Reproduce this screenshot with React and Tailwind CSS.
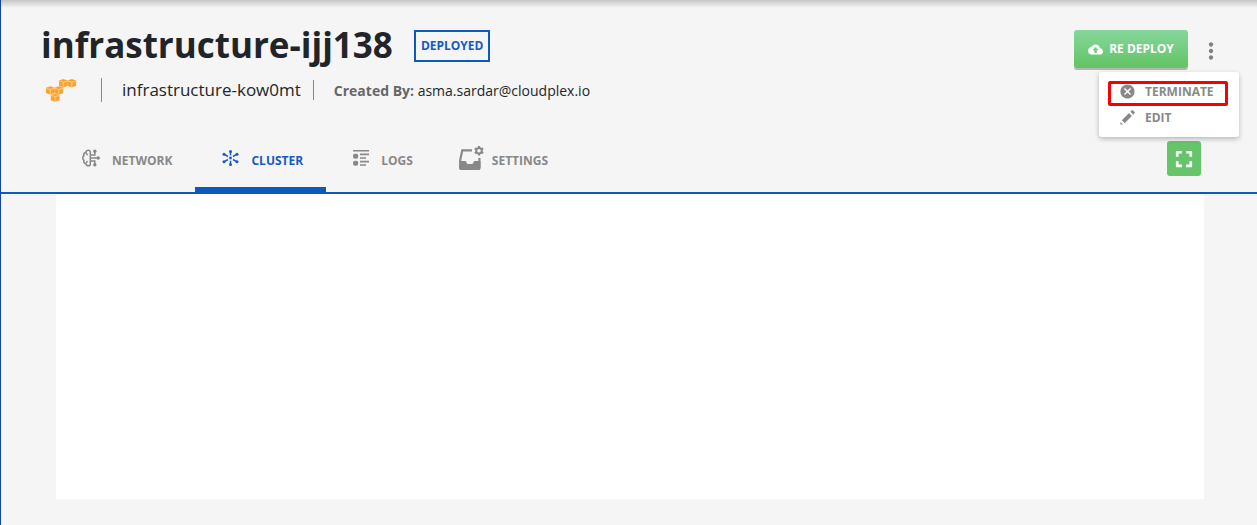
import React from 'react';

function AwsCubes() {
  const cubes = [[13, 0], [21.5, 0], [0, 7.3], [8.5, 7.3], [4.8, 14.4]];
  return (
    <svg className="block h-[23px] w-[31px]" viewBox="0 0 31 23" role="img" aria-label="AWS">
      {cubes.map(([x, y]) => (
        <g key={`${x}-${y}`} transform={`translate(${x} ${y})`}>
          <path d="M4.3 0 8.7 1.5V6.8L4.3 8.4 0 6.8V1.5Z" fill="#f8a431" />
          <path d="M0 2 4.3 3.2 8.7 2M4.3 3.2V8.2" fill="none" stroke="#fce3bf" strokeWidth=".6" />
        </g>
      ))}
    </svg>
  );
}

function NetworkIcon() {
  return (
    <svg className="h-[18px] w-[18px]" viewBox="0 0 18 18" fill="none" stroke="currentColor" strokeWidth="1.5">
      <path d="M8.3 3V15C8.3 17.4 4.3 17.6 4 14.8C1.8 14.4 1.3 12.6 2 11.3C.3 10 .3 7.8 2 6.7C1.3 5.2 2.2 3.4 4 3.2C4.3.4 8.3.6 8.3 3ZM4.2 4.2C4.3 5 4.9 5.6 5.8 5.7M4.2 13.8C4.3 13 4.9 12.4 5.8 12.4M8.3 9H15.5M8.3 6H12.8V3M8.3 12H12.8V15" />
      <g fill="currentColor" stroke="none">
        <circle cx="12.8" cy="2.3" r="1.7" />
        <circle cx="16.2" cy="9" r="1.8" />
        <circle cx="12.8" cy="15.7" r="1.7" />
      </g>
    </svg>
  );
}

function ClusterIcon() {
  return (
    <svg className="h-4 w-[17px]" viewBox="0 0 17 16" fill="currentColor" stroke="currentColor" strokeWidth="1.5">
      <path d="M8.5 2V5.3M8.5 10.7V14M2 4.2 6 6.5M11 9.5 15 11.8M15 4.2 11 6.5M6 9.5 2 11.8" />
      <g stroke="none">
        <circle cx="8.5" cy="1.6" r="1.5" />
        <circle cx="8.5" cy="14.4" r="1.5" />
        <circle cx="2" cy="4.2" r="1.5" />
        <circle cx="15" cy="4.2" r="1.5" />
        <circle cx="2" cy="11.8" r="1.5" />
        <circle cx="15" cy="11.8" r="1.5" />
        <circle cx="8.5" cy="8" r="1.4" />
      </g>
    </svg>
  );
}

function LogsIcon() {
  return (
    <svg className="h-4 w-4" viewBox="0 0 16 16" fill="currentColor">
      <path d="M0 0H16V1.6H0ZM7 3.6H16V5.2H7ZM7 7.2H13V8.8H7ZM7 10.8H16V12.4H7ZM7 14.2H13V15.8H7Z" />
      <rect y="3.8" width="5.2" height="5" rx="2" />
      <rect y="10.8" width="5.2" height="5" rx="2" />
    </svg>
  );
}

function SettingsIcon() {
  return (
    <svg className="h-6 w-[25px]" viewBox="0 0 25 24" fill="none">
      <path d="M13 4.3H3.3L1.2 14V21.5Q1.2 23 2.7 23H19Q20.4 23 20.4 21.5V12" stroke="currentColor" strokeWidth="2.2" />
      <path d="M1 15H6Q7.3 15 7.5 16.4 7.8 18 9.3 18H12.7Q14.2 18 14.4 16.4 14.6 15 16 15H21.5V22Q21.5 24 19.5 24H2.2Q.2 24 .2 22Z" fill="currentColor" />
      <circle cx="20" cy="4.8" r="2.8" stroke="currentColor" strokeWidth="2" />
      <path d="M20 0V2M20 7.6V9.6M15.8 2.4 17.6 3.4M22.4 6.2 24.2 7.2M24.2 2.4 22.4 3.4M17.6 6.2 15.8 7.2" stroke="currentColor" strokeWidth="2" />
    </svg>
  );
}

function MaterialIcon({ d, className }) {
  return (
    <svg className={className} viewBox="0 0 24 24" fill="currentColor" aria-hidden="true">
      <path d={d} />
    </svg>
  );
}

const CLOUD = 'M19.35 10.04C18.67 6.59 15.64 4 12 4 9.11 4 6.6 5.64 5.35 8.04 2.34 8.36 0 10.91 0 14c0 3.31 2.69 6 6 6h13c2.76 0 5-2.24 5-5 0-2.64-2.05-4.78-4.65-4.96zM14 13v4h-4v-4H7l5-5 5 5h-3z';
const CANCEL = 'M12 2C6.47 2 2 6.47 2 12s4.47 10 10 10 10-4.47 10-10S17.53 2 12 2zm5 13.59L15.59 17 12 13.41 8.41 17 7 15.59 10.59 12 7 8.41 8.41 7 12 10.59 15.59 7 17 8.41 13.41 12 17 15.59z';
const PENCIL = 'M2 22V18.2L5.8 22ZM4 16 14.2 5.8 18.2 9.8 8 20ZM16 4 18.2 1.8Q19 1.2 19.8 2L22 4.2Q22.8 5 22 5.8L20 8Z';
const DOTS = 'M12 8c1.1 0 2-.9 2-2s-.9-2-2-2-2 .9-2 2 .9 2 2 2zm0 2c-1.1 0-2 .9-2 2s.9 2 2 2 2-.9 2-2-.9-2-2-2zm0 6c-1.1 0-2 .9-2 2s.9 2 2 2 2-.9 2-2-.9-2-2-2z';
const FULLSCREEN = 'M7 14H4.500v5.500h5.500v-2.500H7v-3zm-2.500-4H7V7h3V4.500H4.500V10zm12.500 7h-3v2.500h5.500v-5.500h-2.500v3zM14 4.500V7h3v3h2.500V4.500H14z';

const TABS = [
  { label: 'NETWORK', Icon: NetworkIcon },
  { label: 'CLUSTER', Icon: ClusterIcon, active: true },
  { label: 'LOGS', Icon: LogsIcon },
  { label: 'SETTINGS', Icon: SettingsIcon, wide: true },
];

function Tab({ label, Icon, active, wide }) {
  return (
    <button
      type="button"
      role="tab"
      aria-selected={!!active}
      className={`flex h-full items-start border-b-[5px] pr-[23px] pt-4 text-[12px] font-bold leading-[22px] ${
        active ? 'border-[#0a5bbb] text-[#1759c4]' : 'border-transparent text-[#888]'
      } ${wide ? 'gap-2 pl-[23px]' : 'gap-3 pl-[27px]'}`}
    >
      <span className="flex h-4 items-center"><Icon /></span>
      {label}
    </button>
  );
}

export default function App() {
  return (
    <div className="min-h-screen border-l border-[#1443a8] bg-[#f5f5f5] pb-[26px] font-['Open_Sans','Noto_Sans',sans-serif] text-[#212529]">
      <div className="h-2 bg-linear-to-b from-[#c6c6c6] to-[#f5f5f5]" />
      <header className="border-b-2 border-[#0a5bbb]">
        <div className="flex justify-between pl-10 pr-[35px]">
          <div>
            <div className="flex h-[66px] items-center gap-[21px] pt-[10px]">
              <h1 className="pb-[2px] text-[35px] font-bold leading-[48px]">infrastructure-ijj138</h1>
              <span className="flex h-8 items-center border-2 border-[#0a5bbb] px-[5px] text-[12px] font-bold text-[#1759c4]">DEPLOYED</span>
            </div>
            <div className="flex h-8 items-center pl-[5px]">
              <AwsCubes />
              <span className="ml-6 h-6 w-px bg-[#888]" />
              <span className="ml-5 text-[17px]">infrastructure-kow0mt</span>
              <span className="ml-3 h-5 w-px bg-[#888]" />
              <span className="ml-5 text-[14px]"><b className="text-[#666]">Created By:</b> asma.sardar@cloudplex.io</span>
            </div>
          </div>
          <div className="relative flex items-start gap-3 pt-[22px]">
            <button type="button" className="flex h-[38px] w-[114px] items-center justify-center gap-[6px] rounded-[3px] bg-linear-to-b from-[#86d69b] to-[#62c462] text-[12px] font-bold text-white shadow-[0_2px_0_#b5b5b5]">
              <MaterialIcon d={CLOUD} className="size-[15px]" />
              RE DEPLOY
            </button>
            <button type="button" aria-label="More actions" className="mt-[9px] flex h-6 w-[22px] items-center justify-center text-[#808080]">
              <MaterialIcon d={DOTS} className="size-[26px] shrink-0" />
            </button>
            <div role="menu" className="absolute -right-[17px] top-16 z-10 h-[65px] w-[140px] rounded-[3px] bg-white pl-5 pt-[6px] text-[12px] font-bold text-[#888] shadow-[0_2px_5px_rgba(0,0,0,0.25)]">
              <div className="pointer-events-none absolute left-[9px] top-[9px] h-[25px] w-[120px] rounded-[2px] border-[3px] border-[#f90000]" />
              <button type="button" role="menuitem" className="flex h-[26px] items-center gap-[9px]">
                <MaterialIcon d={CANCEL} className="size-[17px]" />
                <span className="pt-[2px]">TERMINATE</span>
              </button>
              <button type="button" role="menuitem" className="flex h-[26px] items-center gap-[9px]">
                <MaterialIcon d={PENCIL} className="size-[17px]" />
                <span className="pt-[2px]">EDIT</span>
              </button>
            </div>
          </div>
        </div>
        <div className="flex h-[86px] justify-between pl-[54px] pr-14 pt-7">
          <div role="tablist" className="flex">
            {TABS.map((tab) => <Tab key={tab.label} {...tab} />)}
          </div>
          <button type="button" aria-label="Full screen" className="mt-[7px] flex h-[35px] w-[34px] items-center justify-center rounded-[3px] bg-[#66c46a] text-white">
            <MaterialIcon d={FULLSCREEN} className="size-[26px]" />
          </button>
        </div>
      </header>
      <main className="ml-[55px] mr-[53px] h-[305px] bg-white" />
    </div>
  );
}
